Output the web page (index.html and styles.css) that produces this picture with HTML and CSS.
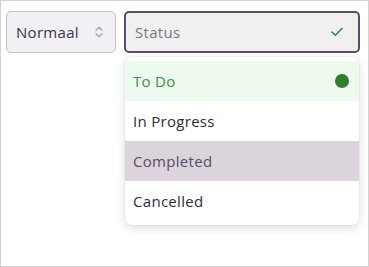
FILE: index.html
```html
<!DOCTYPE html>
<html lang="nl">
<head>
<meta charset="utf-8">
<link rel="stylesheet" href="styles.css">
</head>
<body>
<div class="frame">
  <div class="controls">
    <div class="select size">
      <span class="label">Normaal</span>
      <svg class="updown" width="8" height="12" viewBox="0 0 8 12"><path d="M1 4.2 L4 1.2 L7 4.2 M1 7.8 L4 10.8 L7 7.8" fill="none" stroke="#a7a2ae" stroke-width="1.3" stroke-linecap="round" stroke-linejoin="round"/></svg>
    </div>
    <div class="status-wrap">
      <div class="select status">
        <span class="placeholder">Status</span>
        <svg class="check" width="12" height="10" viewBox="0 0 12 10"><path d="M1 5 L4.3 8.3 L11 1.5" fill="none" stroke="#2f8a3c" stroke-width="1.6" stroke-linecap="round" stroke-linejoin="round"/></svg>
      </div>
      <ul class="menu">
        <li class="opt selected"><span>To Do</span><span class="dot"></span></li>
        <li class="opt"><span>In Progress</span></li>
        <li class="opt active"><span>Completed</span></li>
        <li class="opt"><span>Cancelled</span></li>
      </ul>
    </div>
  </div>
</div>
</body>
</html>
```

FILE: styles.css
```css
html, body {
  margin: 0;
  padding: 0;
  background: #ffffff;
}
.frame {
  box-sizing: border-box;
  width: 369px;
  height: 267px;
  border: 1px solid #d2d2d2;
  padding: 10px 0 0 5px;
  font-family: "Open Sans", "Liberation Sans", sans-serif;
  font-size: 15px;
  letter-spacing: 0.3px;
  color: #2f2b3a;
}
.controls {
  display: flex;
  gap: 8px;
  align-items: flex-start;
}
.select {
  box-sizing: border-box;
  height: 42px;
  display: flex;
  align-items: center;
  justify-content: space-between;
  border-radius: 5px;
}
.size {
  width: 110px;
  background: #f1f0f5;
  border: 1px solid #c3bec8;
  padding: 0 12px 0 9px;
  color: #3a3548;
}
.status-wrap {
  position: relative;
}
.status {
  width: 236px;
  background: #f1f0f1;
  border: 2px solid #5e4b69;
  padding: 0 15px 0 9px;
}
.placeholder {
  color: #7b7585;
}
.menu {
  position: absolute;
  top: 46px;
  left: 1px;
  width: 234px;
  margin: 0;
  padding: 4px 0;
  list-style: none;
  background: #ffffff;
  border-radius: 7px;
  box-shadow: 0 3px 10px rgba(40, 30, 50, 0.14), 0 0 0 1px rgba(0, 0, 0, 0.03);
  box-sizing: border-box;
}
.opt {
  height: 40px;
  display: flex;
  align-items: center;
  justify-content: space-between;
  padding: 0 10px 0 8px;
  color: #2f2b3a;
}
.opt.selected {
  background: #effaef;
  color: #3c9144;
}
.opt.active {
  background: #dbd4dc;
  color: #5a4a65;
}
.dot {
  width: 14px;
  height: 14px;
  border-radius: 50%;
  background: #2e7d35;
}
```
